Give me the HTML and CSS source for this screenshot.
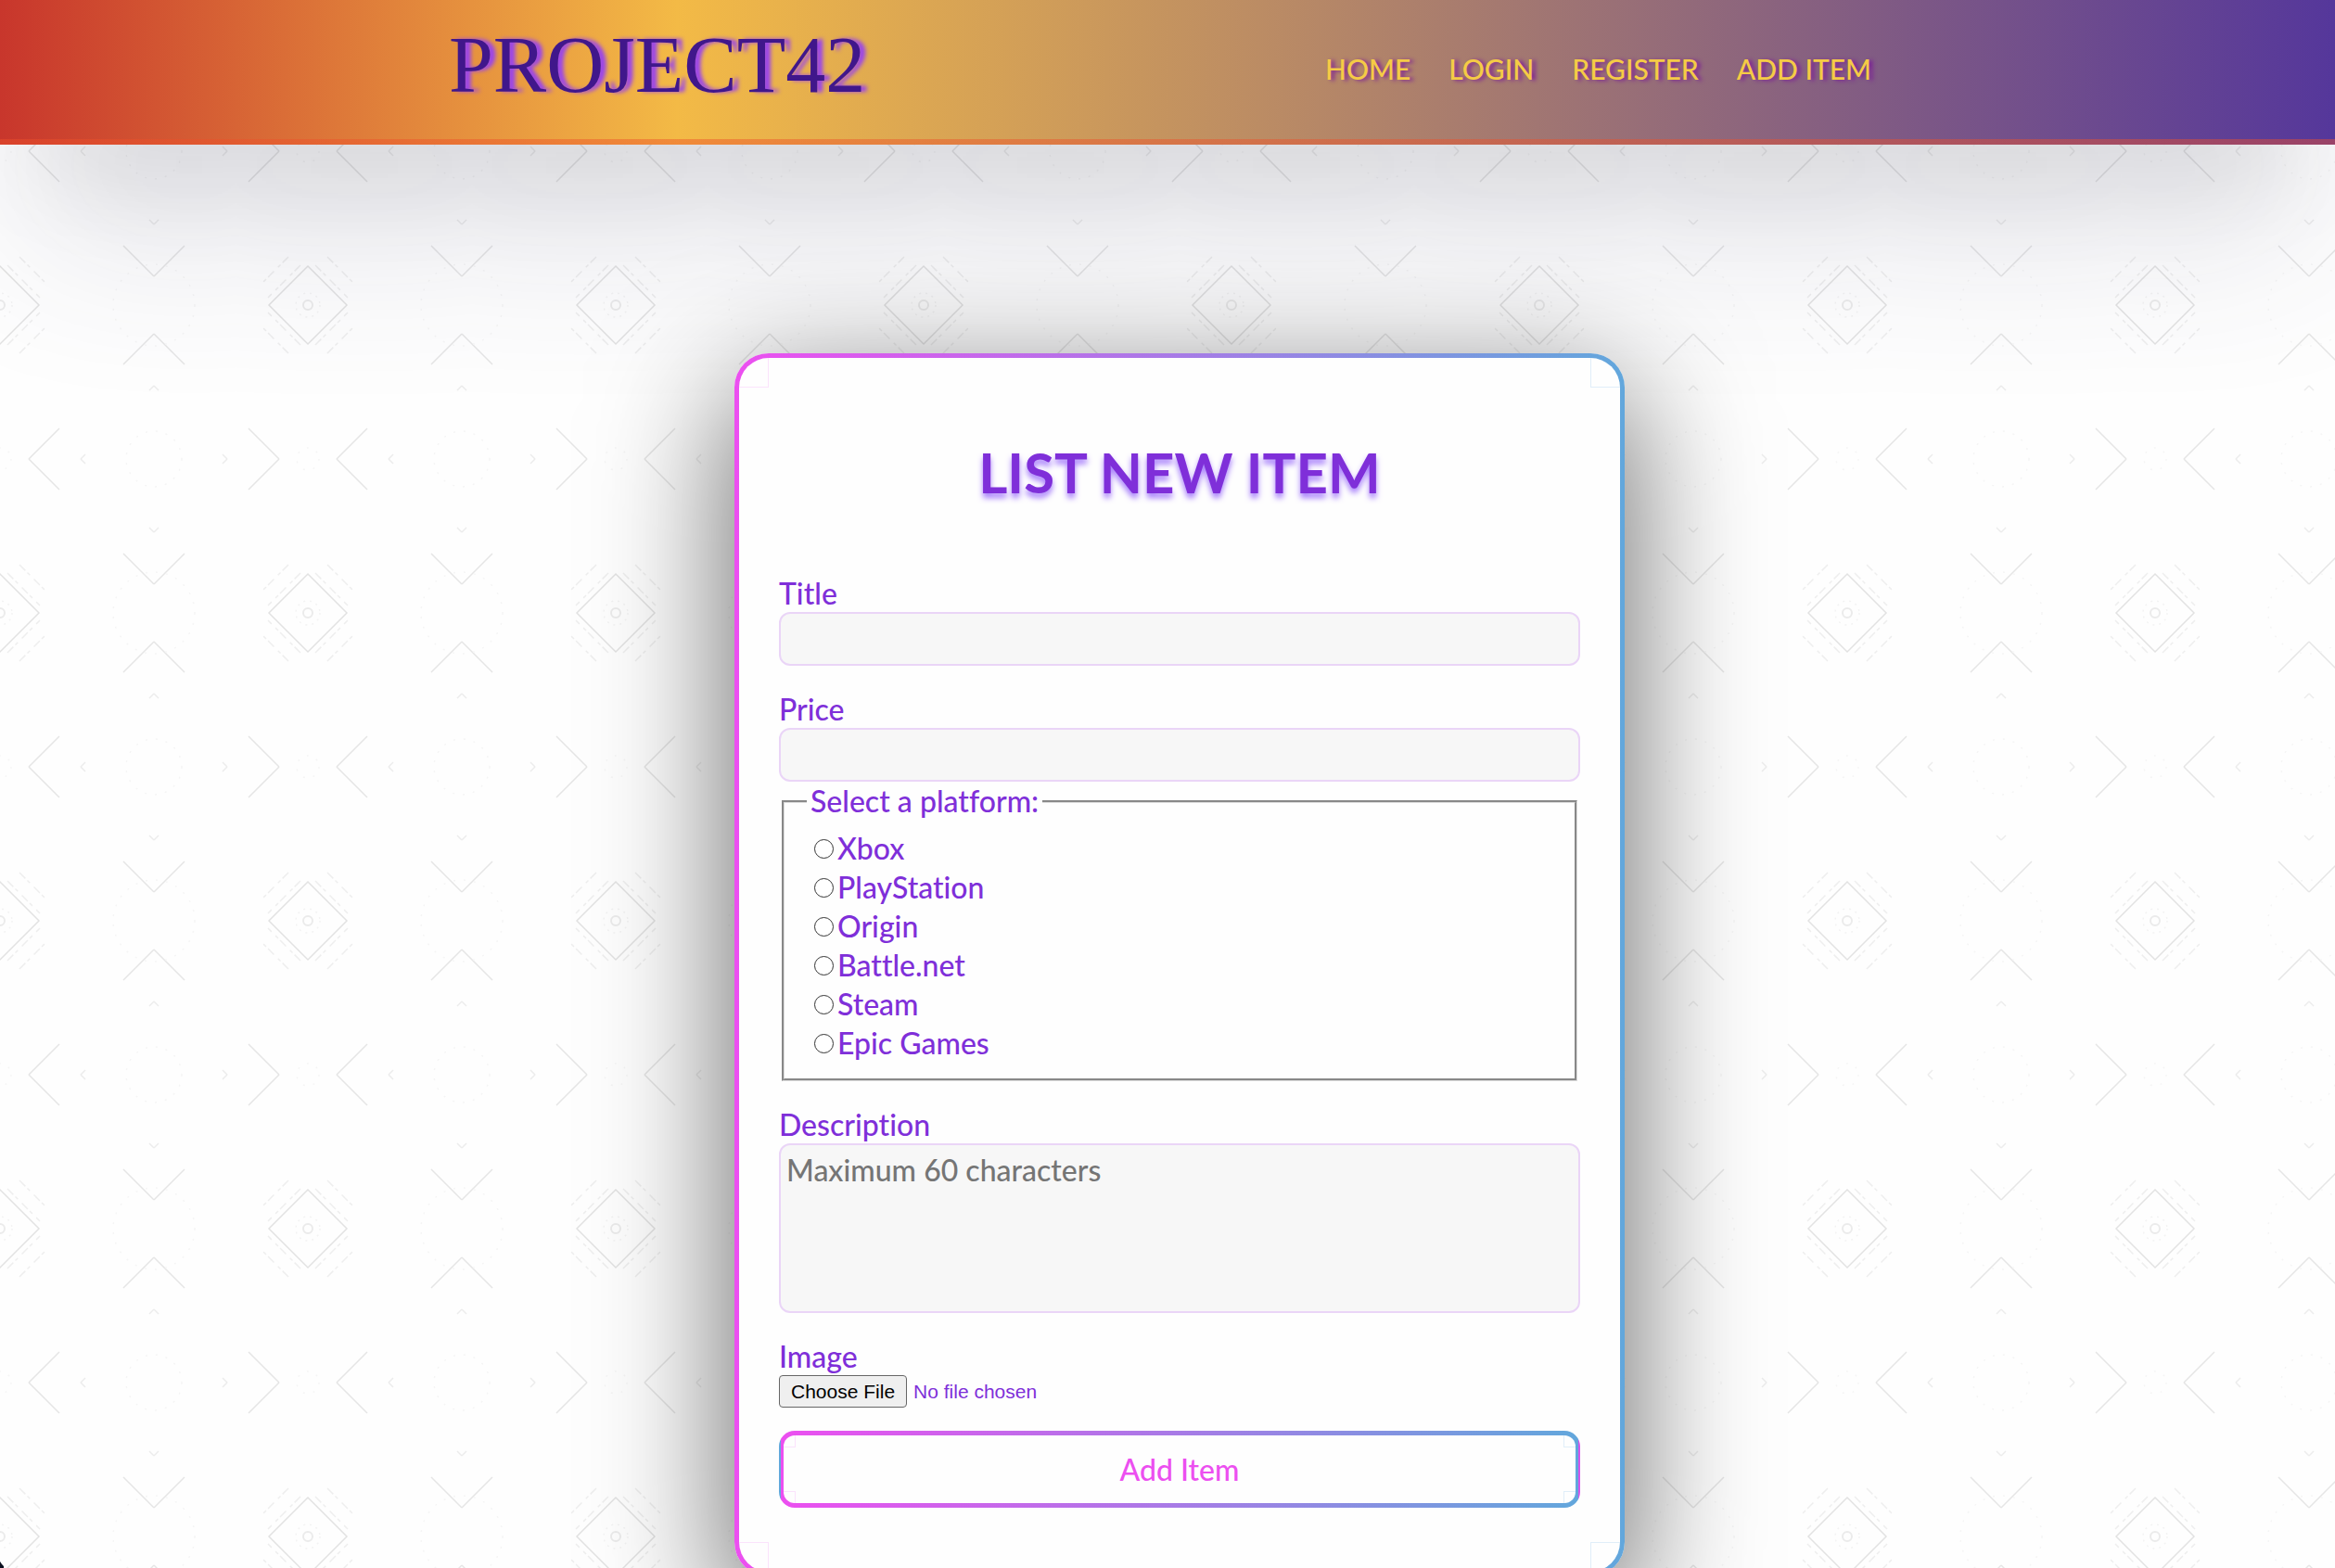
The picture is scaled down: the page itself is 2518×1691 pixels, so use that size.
FILE: index.html
```html
<!DOCTYPE html>
<html lang="en">
<head>
<meta charset="utf-8">
<meta name="viewport" content="width=device-width, initial-scale=1">
<title>Project42 - List new item</title>
<link rel="stylesheet" href="styles.css">
</head>
<body>
<header class="site-header">
  <a class="logo" href="#">PROJECT42</a>
  <nav class="site-nav">
    <a href="#">HOME</a>
    <a href="#">LOGIN</a>
    <a href="#">REGISTER</a>
    <a href="#">ADD ITEM</a>
  </nav>
</header>
<main class="page">
  <form class="card">
    <h1 class="card-title">LIST NEW ITEM</h1>
    <label class="label" for="title">Title</label>
    <input class="field" id="title" type="text">
    <label class="label spaced" for="price">Price</label>
    <input class="field" id="price" type="text">
    <fieldset class="platforms">
      <legend>Select a platform:</legend>
      <label class="option"><input type="radio" name="platform">Xbox</label>
      <label class="option"><input type="radio" name="platform">PlayStation</label>
      <label class="option"><input type="radio" name="platform">Origin</label>
      <label class="option"><input type="radio" name="platform">Battle.net</label>
      <label class="option"><input type="radio" name="platform">Steam</label>
      <label class="option"><input type="radio" name="platform">Epic Games</label>
    </fieldset>
    <label class="label spaced" for="description">Description</label>
    <textarea class="field area" id="description" maxlength="60" placeholder="Maximum 60 characters"></textarea>
    <label class="label spaced" for="image">Image</label>
    <input class="file" id="image" type="file">
    <button class="submit" type="submit">Add Item</button>
  </form>
</main>
</body>
</html>
```
FILE: styles.css
```css
* { box-sizing: border-box; }

html { scrollbar-width: none; }

body {
  margin: 0;
  min-height: 100vh;
  color: #7f2fd9;
  font: 500 32px/42px Lato, "Noto Sans", sans-serif;
  font-variant-ligatures: none;
  background: #fefefe url("data:image/svg+xml,%3Csvg xmlns='http://www.w3.org/2000/svg' width='332' height='332' fill='none' stroke='%23e2e2e2' stroke-width='1.5'%3E%3Cpath d='M166 124L208 166L166 208L124 166Z'/%3E%3Cg stroke='%23eeeeee' stroke-dasharray='9 3 4 6'%3E%3Cpath d='M187 114L218 145M145 114L114 145M187 218L218 187M145 218L114 187M174 123L209 158M158 123L123 158M174 209L209 174M158 209L123 174'/%3E%3C/g%3E%3Ccircle cx='166' cy='166' r='5' stroke='%23ebebeb' stroke-width='2'/%3E%3Ccircle cx='166' cy='166' r='13' stroke='%23f3f3f3' stroke-dasharray='2 5'/%3E%3Cpath stroke='%23e5e5e5' d='M0 135L33 102M332 135L299 102M0 197L33 230M332 197L299 230M135 0L102 33M135 332L102 299M197 0L230 33M197 332L230 299'/%3E%3Cpath stroke='%23ececec' d='M0 79L5 74M332 79L327 74M0 253L5 258M332 253L327 258M79 0L74 5M79 332L74 327M253 0L258 5M253 332L258 327'/%3E%3Cg stroke='%23f5f5f5' stroke-dasharray='2 9'%3E%3Ccircle cx='0' cy='0' r='30'/%3E%3Ccircle cx='332' cy='0' r='30'/%3E%3Ccircle cx='0' cy='332' r='30'/%3E%3Ccircle cx='332' cy='332' r='30'/%3E%3Ccircle cx='0' cy='166' r='44'/%3E%3Ccircle cx='332' cy='166' r='44'/%3E%3Ccircle cx='166' cy='0' r='12'/%3E%3Ccircle cx='166' cy='332' r='12'/%3E%3C/g%3E%3C/svg%3E") -166px 163px;
}

/* rounded window corner */
body::after {
  content: "";
  position: fixed;
  left: 0;
  bottom: 0;
  width: 4px;
  height: 14px;
  background: radial-gradient(circle at 22px -6px, transparent 25px, #0b1020 26px);
}

.site-header {
  position: relative;
  display: flex;
  align-items: center;
  justify-content: space-between;
  height: 156px;
  padding: 0 500px 8px 484px;
  background:
    linear-gradient(rgba(237, 80, 42, .45), rgba(237, 80, 42, .45)) bottom / 100% 6px no-repeat,
    linear-gradient(90deg, #c8362c, #f3ba46 29%, #55379b);
  box-shadow: rgba(50, 50, 93, .2) 0 100px 200px -24px, rgba(0, 0, 0, .2) 0 60px 120px -50px;
}

.logo {
  padding-bottom: 8px;
  color: #40178b;
  font: 86px/100px "Liberation Serif", serif;
  text-decoration: none;
  text-shadow: 6px 0 4px #9b45ea;
}

.site-nav { display: flex; gap: 41px; }

.site-nav a {
  color: #f5cb45;
  font-size: 30px;
  text-decoration: none;
  text-shadow: 4px 1px 4px #7c1f96;
}

.page { padding: 225px 0 0 26px; }

.card {
  --line-left: linear-gradient(#fbe3fc, #fbe3fc);
  --line-right: linear-gradient(#e0eef9, #e0eef9);
  position: relative;
  display: flex;
  flex-direction: column;
  width: 960px;
  margin: 0 auto;
  padding: 83px 43px 69px;
  border: 5px solid transparent;
  border-radius: 37px;
  background:
    var(--line-left) 31px 0 / 1px 32px no-repeat padding-box,
    var(--line-left) 0 31px / 32px 1px no-repeat padding-box,
    var(--line-left) 31px 100% / 1px 32px no-repeat padding-box,
    var(--line-left) 0 calc(100% - 31px) / 32px 1px no-repeat padding-box,
    var(--line-right) calc(100% - 31px) 0 / 1px 32px no-repeat padding-box,
    var(--line-right) 100% 31px / 32px 1px no-repeat padding-box,
    var(--line-right) calc(100% - 31px) 100% / 1px 32px no-repeat padding-box,
    var(--line-right) 100% calc(100% - 31px) / 32px 1px no-repeat padding-box,
    linear-gradient(#fefefe, #fefefe) padding-box,
    linear-gradient(90deg, #ec4ff0, #62a7dc) border-box;
  box-shadow: rgba(0, 0, 0, .56) 0 44px 140px 8px;
}

.card-title {
  margin: 0 0 70px;
  font-size: 60px;
  line-height: 80px;
  font-weight: 700;
  text-align: center;
  text-shadow: 0 5px 6px #a57cfb;
}

.label { line-height: 41px; }
.spaced { margin-top: 26px; }

.field {
  width: 100%;
  height: 58px;
  padding: 6px;
  border: 2px solid #ead5f7;
  border-radius: 12px;
  background: #f7f7f7;
  color: inherit;
  font: inherit;
}

.area { height: 183px; resize: none; }
.area::placeholder { color: #757575; }

.platforms {
  margin: 0 3px;
  padding: 9px 24px 17px;
  border: 3px groove #dcdcdc;
}

.platforms legend { padding: 0 4px; }

.option {
  display: flex;
  align-items: center;
  gap: 4px;
}

.option input {
  appearance: none;
  width: 21px;
  height: 21px;
  margin: 0 0 0 8px;
  border: 1px solid #333;
  border-radius: 50%;
  background: #fff;
}

.option input:checked { background: radial-gradient(#7f2fd9 6px, #fff 7px); }

.file { font: 21px/24px "Liberation Sans", sans-serif; color: inherit; }

.file::file-selector-button {
  height: 35px;
  margin: 0 7px 0 0;
  padding: 0 12px;
  border: 1px solid #666;
  border-radius: 4px;
  background: #efefef;
  color: #000;
  font: inherit;
}

.submit {
  --line-left: linear-gradient(#fbe3fc, #fbe3fc);
  --line-right: linear-gradient(#e0eef9, #e0eef9);
  height: 83px;
  margin-top: 25px;
  border: 5px solid transparent;
  border-radius: 17px;
  background:
    var(--line-left) 12px 0 / 1px 13px no-repeat padding-box,
    var(--line-left) 0 12px / 13px 1px no-repeat padding-box,
    var(--line-left) 12px 100% / 1px 13px no-repeat padding-box,
    var(--line-left) 0 calc(100% - 12px) / 13px 1px no-repeat padding-box,
    var(--line-right) calc(100% - 12px) 0 / 1px 13px no-repeat padding-box,
    var(--line-right) 100% 12px / 13px 1px no-repeat padding-box,
    var(--line-right) calc(100% - 12px) 100% / 1px 13px no-repeat padding-box,
    var(--line-right) 100% calc(100% - 12px) / 13px 1px no-repeat padding-box,
    linear-gradient(#fefefe, #fefefe) padding-box,
    linear-gradient(90deg, #62a7dc 2px, #ec4ff0 2px, #62a7dc calc(100% - 2px), #d455ec calc(100% - 2px)) border-box;
  color: #ec4ff0;
  font: inherit;
}
```
